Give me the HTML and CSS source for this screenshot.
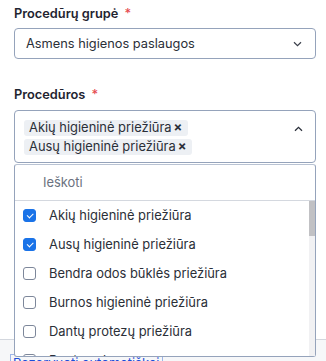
FILE: index.html
```html
<!DOCTYPE html>
<html lang="lt">
  <head>
    <meta charset="UTF-8" />
    <title>Procedūros</title>
    <link rel="stylesheet" href="styles.css">
  </head>
  <body>
    <div class="form">
      <div class="field">
        <label class="label">Procedūrų grupė <span class="req">*</span></label>
        <div class="select">
          <span class="select-value">Asmens higienos paslaugos</span>
          <svg class="chevron" width="9" height="6" viewBox="0 0 9 6">
            <path d="M1 1.2 L4.5 4.6 L8 1.2" fill="none" stroke="#3a3f4a" stroke-width="1.2" />
          </svg>
        </div>
      </div>

      <div class="field field-multi">
        <label class="label">Procedūros <span class="req">*</span></label>
        <div class="multi">
          <div class="tags">
            <span class="tag">Akių higieninė priežiūra<span class="tag-x">×</span></span>
            <span class="tag">Ausų higieninė priežiūra<span class="tag-x">×</span></span>
          </div>
          <svg class="chevron chevron-up" width="9" height="6" viewBox="0 0 9 6">
            <path d="M1 4.8 L4.5 1.4 L8 4.8" fill="none" stroke="#2a2f3a" stroke-width="1.3" />
          </svg>
        </div>

        <div class="dropdown">
          <div class="search">Ieškoti</div>
          <ul class="options">
            <li class="option"><span class="check checked"></span>Akių higieninė priežiūra</li>
            <li class="option"><span class="check checked"></span>Ausų higieninė priežiūra</li>
            <li class="option"><span class="check"></span>Bendra odos būklės priežiūra</li>
            <li class="option"><span class="check"></span>Burnos higieninė priežiūra</li>
            <li class="option"><span class="check"></span>Dantų protezų priežiūra</li>
            <li class="option"><span class="check"></span>Dantų valymas</li>
            <li class="option"><span class="check"></span>Galvos plovimas</li>
            <li class="option"><span class="check"></span>Kojų higieninė priežiūra</li>
          </ul>
          <div class="scrollbar"><div class="scroll-thumb"></div></div>
        </div>
      </div>
    </div>

    <div class="footer">
      <span class="footer-link">Rezervuoti automatiškai</span>
    </div>
  </body>
</html>
```

FILE: styles.css
```css
body {
  margin: 0;
  font-family: Inter, "Noto Sans", sans-serif;
  color: #2b2f38;
  background: #ffffff;
}
.form {
  padding: 5px 10px 0 10px;
}
.field {
  margin-left: 4px;
}
.field-multi {
  position: relative;
  margin-top: 27px;
}
.label {
  display: block;
  font-size: 12.8px;
  font-weight: 600;
  line-height: 18px;
  color: #1f2430;
}
.req {
  color: #e5484d;
  font-weight: 500;
  margin-left: 3px;
}
.select {
  margin-top: 5px;
  height: 31px;
  box-sizing: border-box;
  border: 1px solid #95a3bb;
  border-radius: 4px;
  display: flex;
  align-items: center;
  justify-content: space-between;
  padding: 0 13px 0 11px;
}
.select-value {
  font-size: 12.8px;
}
.multi {
  margin-top: 6px;
  height: 53px;
  box-sizing: border-box;
  border: 1px solid #95a3bb;
  border-radius: 4px;
  display: flex;
  justify-content: space-between;
  padding: 9px 12px 0 9px;
}
.tags {
  display: flex;
  flex-direction: column;
  align-items: flex-start;
  gap: 3px;
}
.tag {
  background: #edf0f4;
  border-radius: 3px;
  font-size: 12.9px;
  line-height: 16px;
  padding: 0 6px 0 5px;
}
.tag-x {
  font-weight: 700;
  margin-left: 2px;
}
.chevron-up {
  margin-top: 6px;
}
.dropdown {
  position: absolute;
  left: 0;
  right: 0;
  top: 100%;
  margin-top: 1px;
  height: 193px;
  box-sizing: border-box;
  background: #ffffff;
  border: 1px solid #95a3bb;
  border-top-color: #b9c3d3;
  border-radius: 3px;
  display: flex;
  flex-direction: column;
}
.search {
  height: 35px;
  line-height: 35px;
  padding-left: 28px;
  font-size: 12.9px;
  color: #6b7280;
  border-bottom: 1px solid #d4d8df;
}
.options {
  list-style: none;
  margin: 0;
  padding: 0;
  flex: 1;
  overflow: hidden;
}
.scrollbar {
  position: absolute;
  right: 0;
  top: 36px;
  bottom: 0;
  width: 6px;
  background: #f1f1f3;
}
.scroll-thumb {
  height: 35px;
  background: #c1c1c4;
}
.option {
  height: 29px;
  display: flex;
  align-items: center;
  font-size: 12.9px;
  padding-left: 8px;
}
.check {
  width: 13px;
  height: 13px;
  box-sizing: border-box;
  border: 1px solid #7d879a;
  border-radius: 3px;
  margin-right: 13px;
  display: inline-flex;
  align-items: center;
  justify-content: center;
}
.check.checked {
  background: #1a73e8;
  border-color: #1a73e8;
}
.check.checked::after {
  content: "";
  width: 5px;
  height: 2.5px;
  border-left: 1.3px solid #fff;
  border-bottom: 1.3px solid #fff;
  transform: rotate(-45deg);
  margin-top: -1px;
}
.footer {
  margin-top: 176px;
  border-top: 1px solid #d3d7de;
  background: #f6f7f9;
  height: 40px;
  padding: 12px 0 0 10px;
  box-sizing: border-box;
}
.footer-link {
  font-size: 13px;
  color: #1d4ed8;
  border: 1px solid #9db5e8;
  padding: 0 2px;
}
```
